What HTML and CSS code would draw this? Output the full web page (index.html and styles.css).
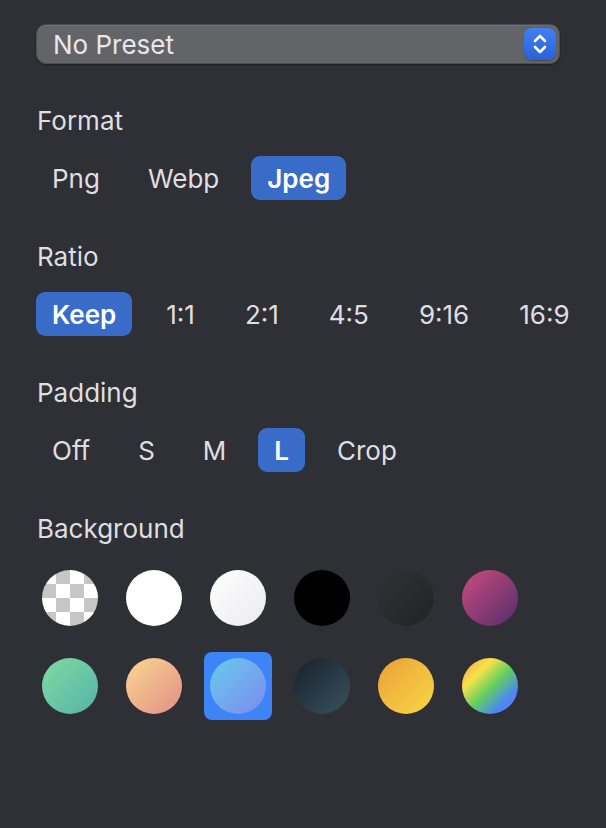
FILE: index.html
```html
<!DOCTYPE html>
<html lang="en">
<head>
<meta charset="utf-8">
<title>Export Settings</title>
<link rel="stylesheet" href="styles.css">
</head>
<body>
<div class="panel">
  <div class="select">
    <span class="select-text">No Preset</span>
    <span class="stepper">
      <svg width="32" height="32" viewBox="0 0 32 32" aria-hidden="true">
        <path d="M11 13 L16 8 L21 13" fill="none" stroke="#fff" stroke-width="2.6" stroke-linecap="round" stroke-linejoin="round"/>
        <path d="M11 19 L16 24 L21 19" fill="none" stroke="#fff" stroke-width="2.6" stroke-linecap="round" stroke-linejoin="round"/>
      </svg>
    </span>
  </div>

  <section class="section">
    <h2 class="label">Format</h2>
    <div class="seg seg-tight">
      <span class="opt">Png</span>
      <span class="opt">Webp</span>
      <span class="opt active">Jpeg</span>
    </div>
  </section>

  <section class="section">
    <h2 class="label">Ratio</h2>
    <div class="seg">
      <span class="opt active">Keep</span>
      <span class="opt">1:1</span>
      <span class="opt">2:1</span>
      <span class="opt">4:5</span>
      <span class="opt">9:16</span>
      <span class="opt">16:9</span>
    </div>
  </section>

  <section class="section">
    <h2 class="label">Padding</h2>
    <div class="seg seg-tight">
      <span class="opt">Off</span>
      <span class="opt">S</span>
      <span class="opt">M</span>
      <span class="opt active">L</span>
      <span class="opt">Crop</span>
    </div>
  </section>

  <section class="section">
    <h2 class="label">Background</h2>
    <div class="swatches">
      <span class="cell"><span class="dot checker"></span></span>
      <span class="cell"><span class="dot white"></span></span>
      <span class="cell"><span class="dot light"></span></span>
      <span class="cell"><span class="dot black"></span></span>
      <span class="cell"><span class="dot dark"></span></span>
      <span class="cell"><span class="dot berry"></span></span>
      <span class="cell"><span class="dot mint"></span></span>
      <span class="cell"><span class="dot peach"></span></span>
      <span class="cell selected"><span class="dot sky"></span></span>
      <span class="cell"><span class="dot night"></span></span>
      <span class="cell"><span class="dot sun"></span></span>
      <span class="cell"><span class="dot rainbow"></span></span>
    </div>
  </section>
</div>
</body>
</html>
```

FILE: styles.css
```css
html, body {
  margin: 0;
  padding: 0;
  background: #2f3035;
}

body {
  font-family: Inter, "Open Sans", "Liberation Sans", sans-serif;
  color: #dfdfe1;
  width: 606px;
  height: 828px;
  overflow: hidden;
}

.panel {
  padding: 24px 46px 0 36px;
  display: flex;
  flex-direction: column;
  gap: 41px;
}

.select {
  height: 40px;
  box-sizing: border-box;
  border-radius: 10px;
  background: #636468;
  border: 1px solid #4c4d52;
  box-shadow: 0 1px 2px rgba(0, 0, 0, 0.35), inset 0 1px 0 rgba(255, 255, 255, 0.07);
  display: flex;
  align-items: center;
  justify-content: space-between;
  padding: 0 3px 0 16px;
}

.select-text {
  font-size: 26px;
  color: #e8e8ea;
}

.stepper {
  width: 32px;
  height: 32px;
  border-radius: 8px;
  background: linear-gradient(#3f80f2, #2a62d8);
  box-shadow: 0 1px 1px rgba(0, 0, 0, 0.3);
  display: flex;
}

.section {
  display: flex;
  flex-direction: column;
  gap: 19px;
}

.label {
  margin: 0;
  font-size: 26px;
  font-weight: 400;
  line-height: 32px;
  padding-left: 1px;
  color: #dfdfe1;
}

.seg {
  display: flex;
  gap: 18px;
}

.seg-tight {
  gap: 16px;
}

.opt {
  height: 44px;
  display: flex;
  align-items: center;
  padding: 0 16px;
  border-radius: 9px;
  font-size: 26px;
  color: #dfdfe1;
}

.opt.active {
  background: #396cc8;
  color: #ffffff;
  font-weight: 600;
}

.swatches {
  display: grid;
  grid-template-columns: repeat(6, 68px);
  column-gap: 16px;
  row-gap: 20px;
}

.cell {
  width: 68px;
  height: 68px;
  box-sizing: border-box;
  padding: 6px;
  border-radius: 8px;
}

.cell.selected {
  background: #3d84f7;
}

.dot {
  display: block;
  width: 56px;
  height: 56px;
  border-radius: 50%;
}

.checker {
  background: repeating-conic-gradient(#c6c6c6 0 25%, #ffffff 0 50%) 0 0 / 28px 28px;
}

.white { background: #ffffff; }
.light { background: linear-gradient(135deg, #ffffff, #ebebee); }
.black { background: #000000; }
.dark { background: linear-gradient(135deg, #313236, #222327); }
.berry { background: linear-gradient(135deg, #cc4b80, #532e6a); }
.mint { background: linear-gradient(135deg, #7fdca0, #56b2ab); }
.peach { background: linear-gradient(135deg, #f7d88f, #e58d88); }
.sky { background: linear-gradient(135deg, #66cdec, #7e88ef); }
.night { background: linear-gradient(135deg, #17212a, #38525f); }
.sun { background: linear-gradient(135deg, #ec9f38, #f7d846); }
.rainbow {
  background: linear-gradient(135deg, #f39a3e 0%, #f8e24b 28%, #64cf5c 52%, #4a86f7 78%, #8d6ff0 100%);
}
```
